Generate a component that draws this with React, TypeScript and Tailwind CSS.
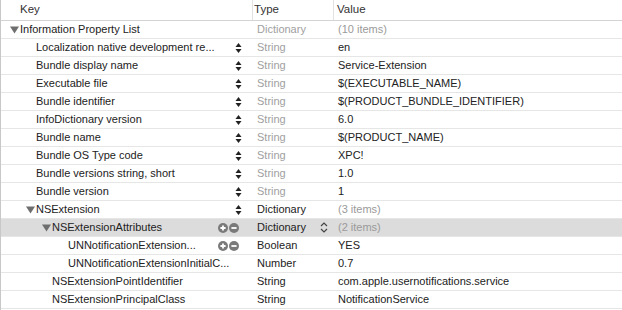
import React from "react";

type Row = {
  key: string;
  level: number;
  tri?: boolean;
  type: string;
  value: string;
  dimType?: boolean;
  dimValue?: boolean;
  ctrl?: "stepper" | "plusminus";
  selected?: boolean;
  popup?: boolean;
};

const rows: Row[] = [
  { key: "Information Property List", level: 0, tri: true, type: "Dictionary", value: "(10 items)", dimType: true, dimValue: true },
  { key: "Localization native development re...", level: 1, type: "String", value: "en", dimType: true, ctrl: "stepper" },
  { key: "Bundle display name", level: 1, type: "String", value: "Service-Extension", dimType: true, ctrl: "stepper" },
  { key: "Executable file", level: 1, type: "String", value: "$(EXECUTABLE_NAME)", dimType: true, ctrl: "stepper" },
  { key: "Bundle identifier", level: 1, type: "String", value: "$(PRODUCT_BUNDLE_IDENTIFIER)", dimType: true, ctrl: "stepper" },
  { key: "InfoDictionary version", level: 1, type: "String", value: "6.0", dimType: true, ctrl: "stepper" },
  { key: "Bundle name", level: 1, type: "String", value: "$(PRODUCT_NAME)", dimType: true, ctrl: "stepper" },
  { key: "Bundle OS Type code", level: 1, type: "String", value: "XPC!", dimType: true, ctrl: "stepper" },
  { key: "Bundle versions string, short", level: 1, type: "String", value: "1.0", dimType: true, ctrl: "stepper" },
  { key: "Bundle version", level: 1, type: "String", value: "1", dimType: true, ctrl: "stepper" },
  { key: "NSExtension", level: 1, tri: true, type: "Dictionary", value: "(3 items)", dimValue: true, ctrl: "stepper" },
  { key: "NSExtensionAttributes", level: 2, tri: true, type: "Dictionary", value: "(2 items)", dimValue: true, ctrl: "plusminus", selected: true, popup: true },
  { key: "UNNotificationExtension...", level: 3, type: "Boolean", value: "YES", ctrl: "plusminus" },
  { key: "UNNotificationExtensionInitialC...", level: 3, type: "Number", value: "0.7" },
  { key: "NSExtensionPointIdentifier", level: 2, type: "String", value: "com.apple.usernotifications.service" },
  { key: "NSExtensionPrincipalClass", level: 2, type: "String", value: "NotificationService" },
];

const Stepper = () => (
  <svg width="7" height="12" viewBox="0 0 7 12" className="shrink-0">
    <path d="M3.5 1 L6.5 5 L0.5 5 Z" fill="#222" />
    <path d="M3.5 11 L6.5 7 L0.5 7 Z" fill="#222" />
  </svg>
);

const PlusMinus = () => (
  <div className="flex gap-[1px] items-center">
    <svg width="10" height="10" viewBox="0 0 10 10">
      <circle cx="5" cy="5" r="5" fill="#7a7a7a" />
      <path d="M5 2.4 V7.6 M2.4 5 H7.6" stroke="#fff" strokeWidth="1.8" />
    </svg>
    <svg width="10" height="10" viewBox="0 0 10 10">
      <circle cx="5" cy="5" r="5" fill="#7a7a7a" />
      <path d="M2.4 5 H7.6" stroke="#fff" strokeWidth="1.8" />
    </svg>
  </div>
);

const Triangle = () => (
  <svg width="9" height="8" viewBox="0 0 9 8" className="shrink-0">
    <path d="M0 0.5 H9 L4.5 7.5 Z" fill="#6e6e6e" />
  </svg>
);

const Popup = () => (
  <svg width="8" height="11" viewBox="0 0 8 11" className="shrink-0">
    <path d="M1 4 L4 1 L7 4 M1 7 L4 10 L7 7" stroke="#444" strokeWidth="1.2" fill="none" />
  </svg>
);

export default function App() {
  return (
    <div
      className="w-[622px] h-[310px] bg-white overflow-hidden border-l border-[#c8c8c8] text-[11px] text-[#222]"
      style={{ fontFamily: '"Liberation Sans", Arial, sans-serif' }}
    >
      <div className="flex h-[21px] border-b border-[#d4d4d4] items-center text-[#333] text-[11.5px]">
        <div className="w-[251px] shrink-0 pl-[19px]">Key</div>
        <div className="w-[81px] shrink-0 h-full border-l border-[#e2e2e2] flex items-center pl-[1px]">Type</div>
        <div className="flex-1 h-full border-l border-[#e2e2e2] flex items-center pl-[3px]">Value</div>
      </div>
      {rows.map((r, i) => (
        <div
          key={i}
          className={`flex h-[18px] items-center border-b border-[#e6e6e6] ${r.selected ? "bg-[#dcdcdc]" : ""}`}
        >
          <div className="w-[251px] shrink-0 flex items-center h-full">
            <div
              className="flex items-center flex-1 min-w-0"
              style={{ paddingLeft: 19 + 16 * r.level - 10 }}
            >
              <div className="w-[10px] shrink-0 flex items-center">{r.tri ? <Triangle /> : null}</div>
              <span className="whitespace-nowrap">{r.key}</span>
            </div>
            {r.ctrl ? (
              <div className="w-[34px] shrink-0 flex justify-end pr-[10px] items-center">
                {r.ctrl === "stepper" ? <Stepper /> : null}
                {r.ctrl === "plusminus" ? <div className="-mr-[7px] pr-[10px]"><PlusMinus /></div> : null}
              </div>
            ) : null}
          </div>
          <div className={`w-[81px] shrink-0 flex items-center justify-between pl-[5px] pr-[5px] ${r.dimType ? "text-[#a0a0a0]" : ""}`}>
            <span>{r.type}</span>
            {r.popup ? <Popup /> : null}
          </div>
          <div className={`flex-1 pl-[5px] whitespace-nowrap ${r.dimValue ? "text-[#9a9a9a]" : ""}`}>{r.value}</div>
        </div>
      ))}
    </div>
  );
}
